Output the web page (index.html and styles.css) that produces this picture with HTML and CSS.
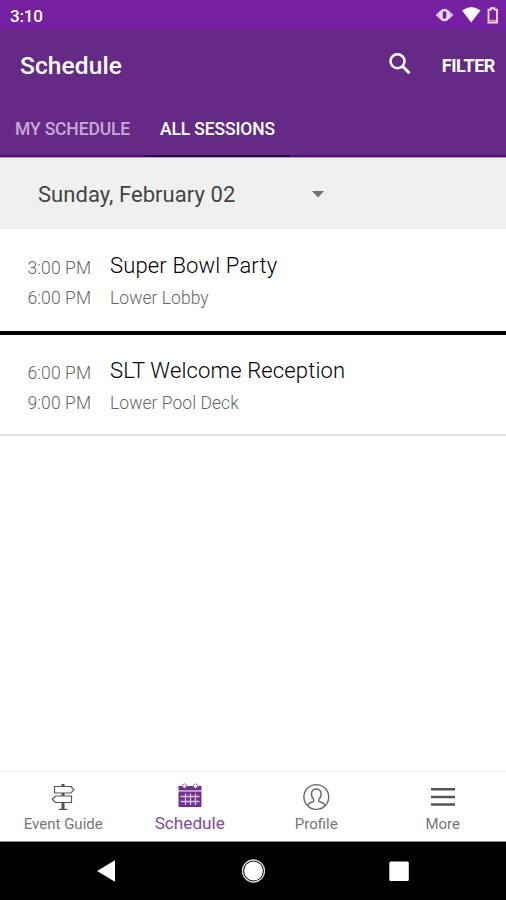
FILE: index.html
```html
<!DOCTYPE html>
<html lang="en">
<head>
    <meta charset="utf-8">
    <title>Schedule</title>
    <link rel="stylesheet" href="styles.css">
</head>
<body>
    <div class="statusbar">
        <span class="clock">3:10</span>
        <svg class="status-icons" width="64" height="20" viewBox="0 0 64 20">
            <path d="M1 10l4-3.500v7zM18 10l-4-3.500v7z" fill="#d9b8ea" stroke="#d9b8ea"/>
            <ellipse cx="9.500" cy="10" rx="5.500" ry="6.300" fill="#ead8f4"/>
            <rect x="7.700" y="6.500" width="3.600" height="7" rx="1" fill="#7420a0"/>
            <path d="M27 5.500q9.500-7 18.500 0l-9.300 12z" fill="#fff"/>
            <path d="M53.500 4.700h2.500v-1.500h3.500v1.500h2.500v13h-8.500z" fill="none" stroke="#f4dff8" stroke-width="1.800"/>
            <path d="M54.500 15.700h6.500" stroke="#ef8f9c" stroke-width="1.800"/>
        </svg>
    </div>

    <header class="header">
        <div class="toolbar">
            <h1 class="title">Schedule</h1>
            <svg class="search" width="24" height="24" viewBox="0 0 24 24">
                <circle cx="9.500" cy="9.200" r="7" fill="none" stroke="#fff" stroke-width="2.500"/>
                <path d="M14.500 14.200l7 7" stroke="#fff" stroke-width="3"/>
            </svg>
            <span class="filter">FILTER</span>
        </div>
        <nav class="tabs">
            <span class="tab my-schedule">MY SCHEDULE</span>
            <span class="tab active">ALL SESSIONS</span>
        </nav>
    </header>

    <div class="date-picker">
        <span class="date">Sunday, February 02</span>
        <svg width="12" height="7" viewBox="0 0 12 7"><path d="M0 0h12l-6 6.500z" fill="#707070"/></svg>
    </div>

    <main class="sessions">
        <div class="session now">
            <div class="times">3:00 PM<br>6:00 PM</div>
            <div class="info">
                <div class="name">Super Bowl Party</div>
                <div class="place">Lower Lobby</div>
            </div>
        </div>
        <div class="session">
            <div class="times">6:00 PM<br>9:00 PM</div>
            <div class="info">
                <div class="name">SLT Welcome Reception</div>
                <div class="place">Lower Pool Deck</div>
            </div>
        </div>
    </main>

    <nav class="bottom-nav">
        <div class="item">
            <svg width="28" height="28" viewBox="0 0 28 28" fill="none" stroke="#555" stroke-width="1.200">
                <path d="M5.500 3.500h16.500l2.800 3.300-2.800 3.200H5.500zM22.500 13H6.500l-3.300 3.200L6.500 19.500h16zM10 26.300h8.500"/>
                <path d="M14 1v3M14 10v3M14 19.500v7" stroke-width="3"/>
            </svg>
            <span>Event Guide</span>
        </div>
        <div class="item selected">
            <svg width="28" height="28" viewBox="0 0 28 28">
                <path d="M2.500 3h23v4.500h-23zM2.500 8.500h23v15.500h-23z" fill="#703290"/>
                <path d="M4.500 13.500h19M4.500 18.500h19M9.500 10.500v11.500M14.500 10.500v11.500M19.500 10.500v11.500" stroke="#d8c2e1" stroke-width="1.300"/>
                <path d="M6.500 4V2q2-2.500 4 0v2q-2 2-4 0zM17.500 4V2q2-2.500 4 0v2q-2 2-4 0z" fill="#fff" stroke="#9b70b1"/>
            </svg>
            <span>Schedule</span>
        </div>
        <div class="item">
            <svg width="28" height="28" viewBox="0 0 28 28" fill="none" stroke="#666" stroke-width="1.400">
                <circle cx="14.300" cy="14" r="12.400"/>
                <path d="M5.500 22.500q1-2.500 4-3.200 3.200-.8 2-3.300-2.500-2.500-2-6 .8-4 4.800-4t4.800 4q.5 3.500-2 6-1.200 2.500 2 3.300 3 .7 4 3.200"/>
            </svg>
            <span>Profile</span>
        </div>
        <div class="item">
            <svg width="28" height="28" viewBox="0 0 28 28" stroke="#555" stroke-width="2.600">
                <path d="M2 6.200h24M2 14h24M2 21.500h24"/>
            </svg>
            <span>More</span>
        </div>
    </nav>

    <div class="android-nav">
        <svg width="24" height="24" viewBox="0 0 24 24"><path d="M2 12L20 1.300v21.500z" fill="#fff"/></svg>
        <svg width="24" height="24" viewBox="0 0 24 24">
            <circle cx="12.500" cy="12" r="11" fill="none" stroke="#ddd" stroke-width="1.300"/>
            <circle cx="12.500" cy="12" r="9.400" fill="#fff"/>
        </svg>
        <svg width="24" height="24" viewBox="0 0 24 24"><rect x="2.300" y="2.500" width="19.500" height="19.500" rx="1.500" fill="#fff"/></svg>
    </div>
</body>
</html>
```
FILE: styles.css
```css
* {
    box-sizing: border-box;
}

body {
    margin: 0;
    height: 900px;
    display: flex;
    flex-direction: column;
    font-family: Roboto, sans-serif;
    background-color: #fff;
    overflow: hidden;
}

.statusbar {
    height: 30px;
    padding: 2px 7px 0 10px;
    display: flex;
    align-items: center;
    justify-content: space-between;
    background-color: #7420a0;
    color: #fff;
}

.clock {
    font-size: 17px;
    font-weight: 500;
    letter-spacing: -0.2px;
}

.status-icons {
    margin-bottom: 2px;
}

.header {
    height: 128px;
    background-color: #652a85;
    border-bottom: 1px solid #b59abf;
    color: #fff;
}

.toolbar {
    height: 70px;
    padding: 0 11px 0 20px;
    display: flex;
    align-items: center;
}

.title {
    margin: 0;
    flex: 1;
    font-size: 24.5px;
    font-weight: 500;
    letter-spacing: 0.1px;
}

.search {
    margin-right: 30px;
    margin-bottom: 3px;
}

.filter {
    font-size: 18px;
    font-weight: 700;
    letter-spacing: -0.4px;
}

.tabs {
    height: 57px;
    display: flex;
    line-height: 58px;
    font-size: 17.5px;
    font-weight: 500;
    letter-spacing: -0.15px;
    border-bottom: 2px solid #581079;
}

.tab {
    width: 145px;
    height: 57px;
    text-align: center;
    white-space: nowrap;
}

.my-schedule {
    color: #c9a8d8;
}

.active {
    border-bottom: 2px solid #27084a;
}

.date-picker {
    height: 71px;
    padding: 2px 182px 0 38px;
    display: flex;
    align-items: center;
    justify-content: space-between;
    background-color: #f0f0f0;
    color: #444;
}

.date {
    font-size: 22px;
    letter-spacing: 0.05px;
}

.sessions {
    flex: 1;
}

.session {
    height: 101px;
    padding: 21px 0 0 27.5px;
    display: flex;
    border-bottom: 2px solid #e2e2e2;
}

.now {
    height: 106px;
    padding-top: 22px;
    border-bottom: 4px solid #000;
}

.times {
    width: 82.5px;
    padding-top: 2px;
    font-size: 17.5px;
    line-height: 30px;
    font-weight: 300;
    letter-spacing: 0.1px;
    color: #666;
}

.name {
    font-size: 22px;
    line-height: 29px;
    font-weight: 300;
    letter-spacing: 0.15px;
    color: #000;
}

.place {
    margin-top: 4px;
    font-size: 17.5px;
    line-height: 29px;
    font-weight: 300;
    letter-spacing: 0.05px;
    color: #666;
}

.bottom-nav {
    height: 71px;
    display: flex;
    border-top: 1px solid #eee;
    border-bottom: 1px solid #888;
}

.item {
    flex: 1;
    padding-top: 11px;
    display: flex;
    flex-direction: column;
    align-items: center;
    font-size: 15px;
    line-height: 27px;
    color: #777;
}

.selected {
    font-size: 17.2px;
    line-height: 25px;
    color: #8048a0;
}

.android-nav {
    height: 58px;
    padding: 0 95px;
    display: flex;
    align-items: center;
    justify-content: space-between;
    background-color: #000;
}
```
